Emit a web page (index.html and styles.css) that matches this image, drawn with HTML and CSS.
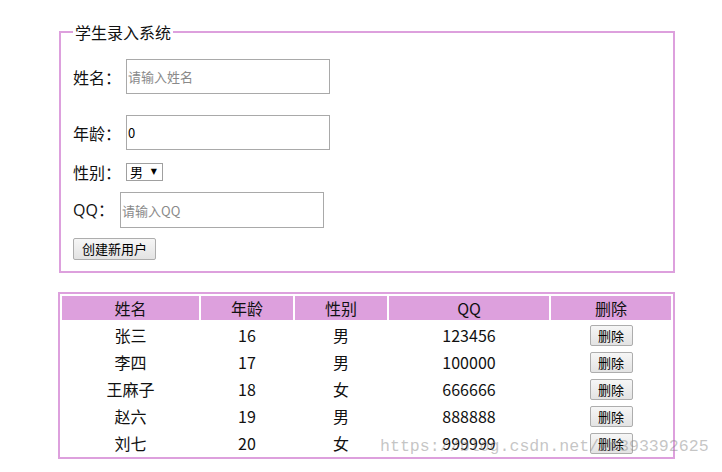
FILE: index.html
```html
<!DOCTYPE html>
<html lang="zh">
<head>
<meta charset="utf-8">
<title>学生录入系统</title>
<link rel="stylesheet" href="styles.css">
</head>
<body>
<div class="page">
  <fieldset class="panel">
    <legend class="panel-title">学生录入系统</legend>
    <div class="row row-name">
      <label class="label">姓名：</label>
      <input class="field" type="text" placeholder="请输入姓名">
    </div>
    <div class="row row-age">
      <label class="label">年龄：</label>
      <input class="field" type="text" value="0">
    </div>
    <div class="row row-sex">
      <label class="label">性别：</label>
      <div class="select-wrap">
        <select class="select"><option>男</option><option>女</option></select>
        <span class="select-arrow">▼</span>
      </div>
    </div>
    <div class="row row-qq">
      <label class="label">QQ：</label>
      <input class="field" type="text" placeholder="请输入QQ">
    </div>
    <div class="row row-btn">
      <button class="btn btn-create" type="button">创建新用户</button>
    </div>
  </fieldset>

  <table class="grid">
    <colgroup>
      <col class="c1"><col class="c2"><col class="c3"><col class="c4"><col class="c5">
    </colgroup>
    <thead>
      <tr><th>姓名</th><th>年龄</th><th>性别</th><th>QQ</th><th>删除</th></tr>
    </thead>
    <tbody>
      <tr><td>张三</td><td>16</td><td>男</td><td>123456</td><td><button class="btn btn-del" type="button">删除</button></td></tr>
      <tr><td>李四</td><td>17</td><td>男</td><td>100000</td><td><button class="btn btn-del" type="button">删除</button></td></tr>
      <tr><td>王麻子</td><td>18</td><td>女</td><td>666666</td><td><button class="btn btn-del" type="button">删除</button></td></tr>
      <tr><td>赵六</td><td>19</td><td>男</td><td>888888</td><td><button class="btn btn-del" type="button">删除</button></td></tr>
      <tr><td>刘七</td><td>20</td><td>女</td><td>999999</td><td><button class="btn btn-del" type="button">删除</button></td></tr>
    </tbody>
  </table>

  <div class="watermark">https://blog.csdn.net/xm393392625</div>
</div>
</body>
</html>
```

FILE: styles.css
```css
* { box-sizing: border-box; }

html, body {
  margin: 0;
  padding: 0;
  background: #ffffff;
}

body {
  font-family: "Noto Sans CJK SC", "Noto Sans", sans-serif;
  font-size: 16px;
  color: #111;
}

.page {
  position: relative;
  width: 722px;
  height: 472px;
  padding: 22px 0 0 59px;
}

.panel {
  width: 616px;
  margin: 0;
  border: 2px solid #dda0dd;
  padding: 0 12px 11px 12px;
}

.panel-title {
  padding: 0 2px;
  margin-left: 0;
  font-size: 16px;
  line-height: 20px;
  height: 20px;
}

.row {
  display: flex;
  align-items: center;
}

.label {
  display: block;
  width: 53px;
  font-size: 16px;
  line-height: 20px;
  height: 20px;
  white-space: nowrap;
}

.row-qq .label {
  width: 47px;
  font-family: "Open Sans", "Noto Sans CJK SC", sans-serif;
}

.row-name { margin-top: 17px; }
.row-age { margin-top: 21px; }
.row-sex { margin-top: 13px; height: 18px; }
.row-qq { margin-top: 11px; }
.row-btn { margin-top: 10px; }

.field {
  display: block;
  width: 204px;
  height: 35px;
  border: 1px solid #a9a9a9;
  padding: 0 1px;
  font-family: "Noto Sans CJK SC", "Noto Sans", sans-serif;
  font-size: 13px;
  color: #000;
  background: #fff;
  outline: none;
}

.row-qq .field { height: 36px; }

.field::placeholder {
  color: #8a8a8a;
}

.select-wrap {
  position: relative;
  width: 37px;
  height: 18px;
}

.select {
  display: block;
  -webkit-appearance: none;
  appearance: none;
  width: 37px;
  height: 18px;
  border: 1px solid #a0a0a0;
  border-radius: 0;
  background: #fff;
  padding: 0 0 0 3px;
  margin: 0;
  font-family: "Noto Sans CJK SC", "Noto Sans", sans-serif;
  font-size: 13px;
  line-height: 16px;
  color: #000;
}

.select-arrow {
  position: absolute;
  right: 6px;
  top: 4px;
  font-family: "DejaVu Sans", sans-serif;
  font-size: 8px;
  line-height: 9px;
  color: #000;
  pointer-events: none;
}

.btn {
  font-family: "Noto Sans CJK SC", "Noto Sans", sans-serif;
  font-size: 13px;
  line-height: 18px;
  color: #000;
  border: 1px solid #adadad;
  border-radius: 2px;
  background: linear-gradient(#f6f6f6, #e3e3e3);
  padding: 0;
}

.btn-create {
  display: block;
  width: 83px;
  height: 22px;
}

.grid {
  margin-top: 19px;
  width: 617px;
  table-layout: fixed;
  border: 2px solid #dda0dd;
  border-collapse: separate;
  border-spacing: 2px;
  margin-left: -1px;
}

.c1 { width: 137px; }
.c2 { width: 92px; }
.c3 { width: 92px; }
.c4 { width: 160px; }
.c5 { width: 120px; }

.grid th {
  background: #dda0dd;
  font-weight: normal;
  font-size: 16px;
  height: 24px;
  line-height: 22px;
  padding: 0;
  text-align: center;
}

.grid td {
  height: 25px;
  padding: 0;
  line-height: 20px;
  text-align: center;
  font-size: 16px;
}

.btn-del {
  width: 43px;
  height: 21px;
  vertical-align: middle;
}

.watermark {
  position: absolute;
  left: 380px;
  top: 437px;
  font-family: "Liberation Mono", monospace;
  font-size: 16.6px;
  line-height: 20px;
  color: rgba(140, 140, 140, 0.5);
  white-space: nowrap;
  pointer-events: none;
}
```
